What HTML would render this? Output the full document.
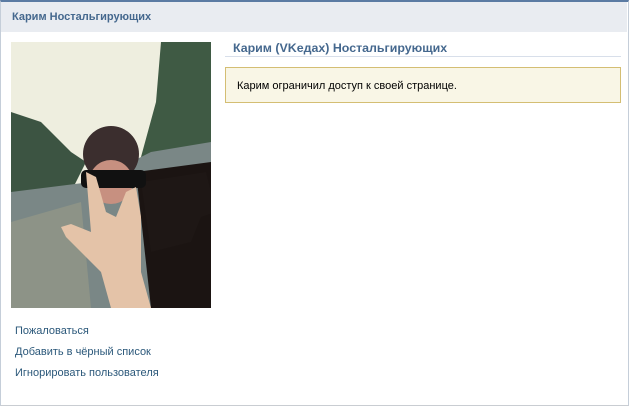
<!DOCTYPE html>
<html><head><meta charset="utf-8"><style>
*{margin:0;padding:0;box-sizing:border-box}
body{width:629px;height:406px;background:#fff;font-family:"Liberation Sans",Arial,sans-serif;font-size:11px;overflow:hidden;position:relative}
.frame{position:absolute;left:0;top:0;width:629px;height:406px;border:1px solid #c5ced9;border-top:2px solid #5b7ba3;border-bottom-color:#c9cdd2}
.hdr{position:absolute;left:1px;top:2px;width:626px;height:30px;background:#e9ecf1}
.hdr span{position:absolute;left:11px;top:9px;font-weight:bold;color:#45688e;font-size:11px}
.photo{position:absolute;left:11px;top:42px;width:200px;height:266px}
.name{position:absolute;left:233px;top:41px;font-weight:bold;font-size:12.4px;color:#45688e}
.line{position:absolute;left:225px;top:56px;width:396px;height:1px;background:#d8dfea}
.box{position:absolute;left:225px;top:67px;width:396px;height:36px;background:#f9f6e6;border:1px solid #d4be73}
.box span{position:absolute;left:11px;top:12px;color:#000}
.links{position:absolute;left:15px;top:321px;color:#2b587a;line-height:21px}
</style></head><body>
<div class="frame"></div>
<div class="hdr"><span>Карим Ностальгирующих</span></div>
<svg class="photo" viewBox="0 0 200 266">
<rect width="200" height="266" fill="#eeeedf"/>
<path d="M150 0 L200 0 L200 110 L130 115 L145 60Z" fill="#3f5a44"/>
<path d="M0 70 L30 80 L60 110 L75 120 L60 150 L0 165Z" fill="#3c5442"/>
<path d="M0 150 L80 140 L140 110 L200 100 L200 266 L0 266Z" fill="#7a8786"/>
<path d="M0 180 L70 160 L80 266 L0 266Z" fill="#8d9387"/>
<path d="M125 130 L200 120 L200 266 L140 266Z" fill="#1b1412"/>
<path d="M130 140 L195 130 L205 170 L190 175 L180 200 L140 210Z" fill="#1e1715"/>
<ellipse cx="100" cy="112" rx="28" ry="28" fill="#3b2e2e"/>
<ellipse cx="100" cy="140" rx="22" ry="22" fill="#c79080"/>
<rect x="70" y="128" width="65" height="18" rx="5" fill="#111"/>
<path d="M75 130 L85 135 L95 170 L105 175 L115 150 L125 145 L130 175 L130 230 L140 266 L100 266 L90 230 L55 195 L50 185 L60 182 L80 190Z" fill="#e4c3a8"/>
</svg>
<div class="name">Карим (VKедах) Ностальгирующих</div>
<div class="line"></div>
<div class="box"><span>Карим ограничил доступ к своей странице.</span></div>
<div class="links">Пожаловаться<br>Добавить в чёрный список<br>Игнорировать пользователя</div>
</body></html>
